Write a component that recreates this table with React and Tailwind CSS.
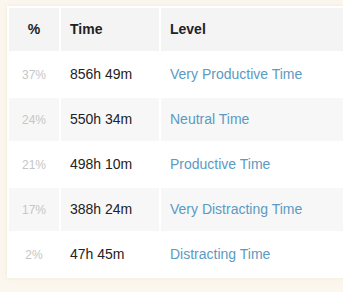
const rows = [
  { pct: '37%', time: '856h 49m', level: 'Very Productive Time' },
  { pct: '24%', time: '550h 34m', level: 'Neutral Time' },
  { pct: '21%', time: '498h 10m', level: 'Productive Time' },
  { pct: '17%', time: '388h 24m', level: 'Very Distracting Time' },
  { pct: '2%', time: '47h 45m', level: 'Distracting Time' },
];

export default function App() {
  return (
    <div
      className="h-[292px] w-[343px] overflow-hidden bg-[#fcf7ee] pt-[6px] pl-[7px]"
      style={{ fontFamily: '"Liberation Sans", Arial, sans-serif' }}
    >
      <div className="w-[380px] bg-white shadow-[0_0_4px_rgba(230,215,190,0.5)]">
        <table className="w-full border-separate border-spacing-[2px] text-[14px] text-[#222]">
          <thead>
            <tr>
              <th className="h-[43px] w-[50px] bg-[#f4f4f4] p-0 text-center font-bold">%</th>
              <th className="h-[43px] w-[98px] bg-[#f4f4f4] p-0 pl-[9px] text-left font-bold">Time</th>
              <th className="h-[43px] bg-[#f4f4f4] p-0 pl-[9px] text-left font-bold">Level</th>
            </tr>
          </thead>
          <tbody>
            {rows.map((r, i) => {
              const bg = i % 2 === 1 ? 'bg-[#f7f7f7]' : 'bg-white';
              return (
                <tr key={r.level}>
                  <td className={`h-[43px] p-0 text-center text-[12px] text-[#c6c6c6] ${bg}`}>{r.pct}</td>
                  <td className={`h-[43px] p-0 pl-[9px] ${bg}`}>{r.time}</td>
                  <td className={`h-[43px] p-0 pl-[9px] text-[#5b9ac2] ${bg}`}>{r.level}</td>
                </tr>
              );
            })}
          </tbody>
        </table>
      </div>
    </div>
  );
}
